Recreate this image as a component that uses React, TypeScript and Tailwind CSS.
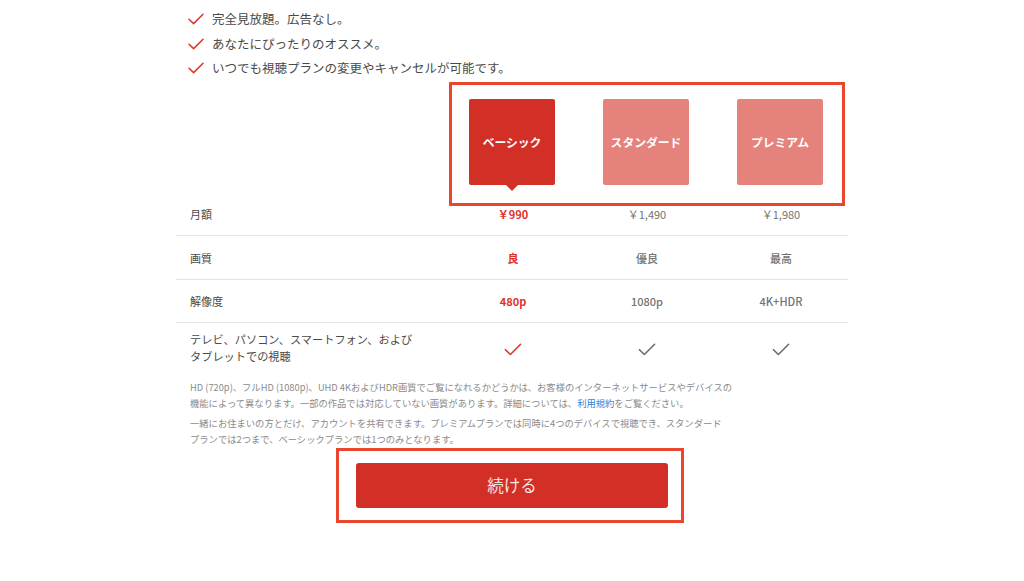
import React from "react";

const Check = ({ color, w = 16, h = 12 }: { color: string; w?: number; h?: number }) => (
  <svg width={w} height={h} viewBox="0 0 16 12" fill="none">
    <path d="M1 6.2 L5.6 10.6 L15 1.2" stroke={color} strokeWidth="1.5" strokeLinecap="round" strokeLinejoin="round" />
  </svg>
);

const features = ["完全見放題。広告なし。", "あなたにぴったりのオススメ。", "いつでも視聴プランの変更やキャンセルが可能です。"];

export default function App() {
  return (
    <div
      className="w-[1024px] h-[581px] bg-white overflow-hidden"
      style={{ fontFamily: '"Noto Sans CJK JP", "Noto Sans", sans-serif' }}
    >
      <div className="w-[672px] ml-[176px] pt-[7px]">
        {/* features */}
        <div className="pl-[12px]">
          {features.map((f) => (
            <div key={f} className="flex items-center h-[24.5px]">
              <Check color="#e0332a" w={16} h={12} />
              <span className="ml-[8px] text-[12.5px] text-[#4a4a4a] leading-none">{f}</span>
            </div>
          ))}
        </div>

        {/* plan header */}
        <div className="flex mt-[1.5px]">
          <div className="flex-1" />
          <div className="w-[396px] mr-[3px] h-[124px] border-[3px] border-[#ea452d] pl-[17px] pt-[14px] flex gap-[48px]">
            <div className="relative w-[86px] h-[86px] rounded-[2px] bg-[#d22f27] flex items-center justify-center text-white text-[11.8px] font-bold">
              ベーシック
              <div className="absolute left-1/2 -translate-x-1/2 top-full w-0 h-0 border-l-[6.5px] border-r-[6.5px] border-t-[6.5px] border-l-transparent border-r-transparent border-t-[#d22f27]" />
            </div>
            <div className="w-[86px] h-[86px] rounded-[2px] bg-[#e5827c] flex items-center justify-center text-white text-[11.8px] font-bold">
              スタンダード
            </div>
            <div className="w-[86px] h-[86px] rounded-[2px] bg-[#e5827c] flex items-center justify-center text-white text-[11.8px] font-bold">
              プレミアム
            </div>
          </div>
        </div>

        {/* table rows */}
        <div className="flex h-[30px] border-b border-[#e3e3e3] text-[11px] leading-[16px]">
          <div className="flex-1 pl-[14px] text-[#4a4a4a]">月額</div>
          <div className="w-[134px] text-center text-[#e0332a] font-bold">￥990</div>
          <div className="w-[134px] text-center text-[#737373]">￥1,490</div>
          <div className="w-[134px] text-center text-[#737373]">￥1,980</div>
        </div>
        <div className="flex items-center h-[44px] border-b border-[#e3e3e3] text-[11px] leading-[16px]">
          <div className="flex-1 pl-[14px] text-[#4a4a4a]">画質</div>
          <div className="w-[134px] text-center text-[#e0332a] font-bold">良</div>
          <div className="w-[134px] text-center text-[#737373] font-medium">優良</div>
          <div className="w-[134px] text-center text-[#737373] font-medium">最高</div>
        </div>
        <div className="flex items-center h-[43px] border-b border-[#e3e3e3] text-[11px] leading-[16px]">
          <div className="flex-1 pl-[14px] text-[#4a4a4a]">解像度</div>
          <div className="w-[134px] text-center text-[#e0332a] font-bold">480p</div>
          <div className="w-[134px] text-center text-[#737373] font-medium">1080p</div>
          <div className="w-[134px] text-center text-[#737373] font-medium">4K+HDR</div>
        </div>
        <div className="flex items-start pt-[7.5px] h-[57px] text-[11.2px] leading-[17px]">
          <div className="flex-1 pl-[14px] text-[#4a4a4a]">
            テレビ、パソコン、スマートフォン、および
            <br />
            タブレットでの視聴
          </div>
          <div className="w-[134px] flex justify-center pt-[12px]">
            <Check color="#e0332a" w={18} h={13} />
          </div>
          <div className="w-[134px] flex justify-center pt-[12px]">
            <Check color="#6b6b6b" w={18} h={13} />
          </div>
          <div className="w-[134px] flex justify-center pt-[12px]">
            <Check color="#6b6b6b" w={18} h={13} />
          </div>
        </div>

        {/* notes */}
        <div className="pl-[14px] text-[9.3px] leading-[15.5px] text-[#8a8a8a] whitespace-nowrap">
          <p>
            HD (720p)、フルHD (1080p)、UHD 4KおよびHDR画質でご覧になれるかどうかは、お客様のインターネットサービスやデバイスの
            <br />
            機能によって異なります。一部の作品では対応していない画質があります。詳細については、
            <span className="text-[#2f7de1]">利用規約</span>をご覧ください。
          </p>
          <p className="mt-[5px]">
            一緒にお住まいの方とだけ、アカウントを共有できます。プレミアムプランでは同時に4つのデバイスで視聴でき、スタンダード
            <br />
            プランでは2つまで、ベーシックプランでは1つのみとなります。
          </p>
        </div>

        {/* button */}
        <div className="ml-[160px] mt-[1px] w-[348px] border-[3px] border-[#ea452d] pl-[17px] pr-[13px] py-[12px]">
          <div className="h-[45px] rounded-[3px] bg-[#d22f27] flex items-center justify-center text-[16.5px] text-[#fbe3e1]">
            続ける
          </div>
        </div>
      </div>
    </div>
  );
}
